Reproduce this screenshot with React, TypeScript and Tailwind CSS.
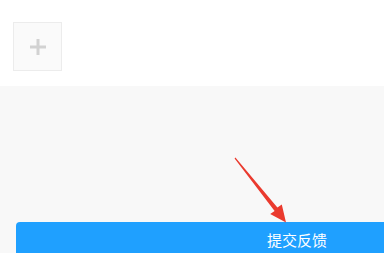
const Arrow = () => (
  <svg
    className="pointer-events-none absolute left-0 top-0"
    width="384"
    height="253"
    viewBox="0 0 384 253"
  >
    <polygon
      points="235.4,157.6 277.4,207.6 281.8,204.6 286,222.5 270.2,214 274.6,210.9 234.6,158.4"
      fill="#ea3a2e"
    />
  </svg>
);

export default function App() {
  return (
    <div
      className="relative flex h-[253px] w-[384px] flex-col overflow-hidden bg-[#f8f8f8]"
      style={{ fontFamily: '"Noto Sans CJK SC", "Noto Sans", sans-serif' }}
    >
      <div className="h-[86px] shrink-0 bg-white pl-[13px] pt-[22px]">
        <button className="flex h-[49px] w-[49px] items-center justify-center border border-[#ececec] bg-[#fafafa]">
          <svg width="18" height="18" viewBox="0 0 18 18">
            <rect x="7.5" y="1" width="3" height="16" fill="#d2d2d2" />
            <rect x="1" y="7.5" width="16" height="3" fill="#d2d2d2" />
          </svg>
        </button>
      </div>
      <div className="flex-1 pl-[16px] pt-[136px]">
        <button className="flex h-[36px] w-[562px] shrink-0 items-center justify-center rounded-[4px] bg-[#1fa0ff] text-[15px] text-white">
          提交反馈
        </button>
      </div>
      <Arrow />
    </div>
  );
}
